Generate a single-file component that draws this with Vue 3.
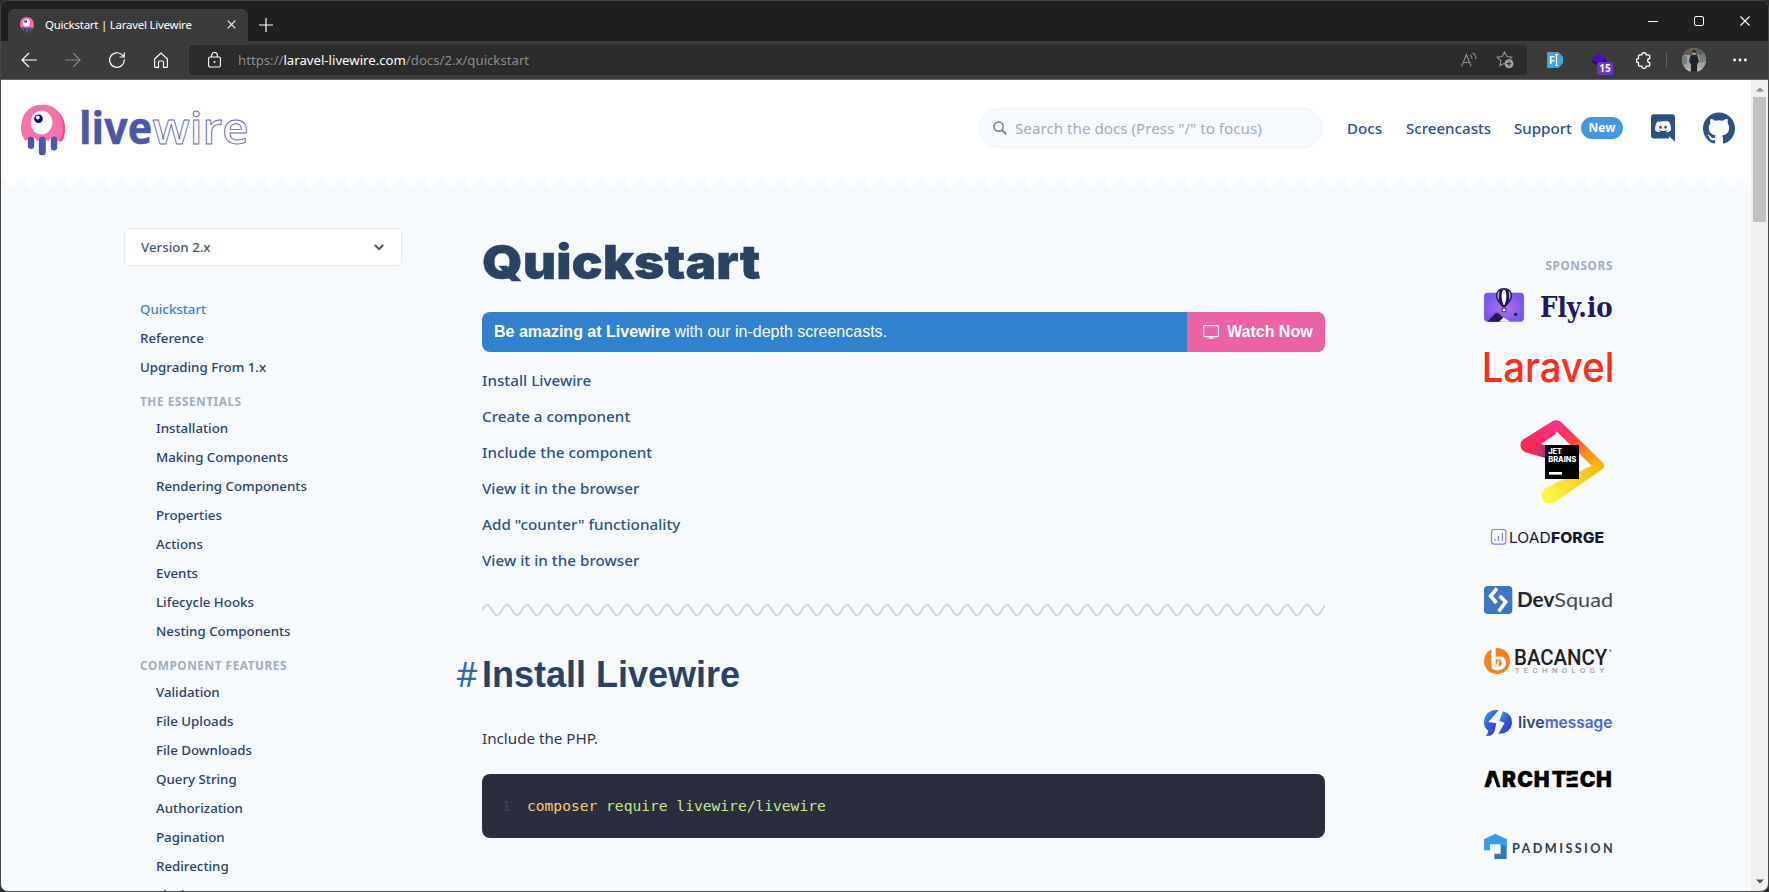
<script setup>
const topLinks = ['Quickstart', 'Reference', 'Upgrading From 1.x']
const sections = [
  {
    title: 'The Essentials',
    links: ['Installation', 'Making Components', 'Rendering Components', 'Properties', 'Actions', 'Events', 'Lifecycle Hooks', 'Nesting Components'],
  },
  {
    title: 'Component Features',
    links: ['Validation', 'File Uploads', 'File Downloads', 'Query String', 'Authorization', 'Pagination', 'Redirecting', 'Flash Messages'],
  },
]
const toc = [
  'Install Livewire',
  'Create a component',
  'Include the component',
  'View it in the browser',
  'Add "counter" functionality',
  'View it in the browser',
]
</script>

<template>
  <div class="window">
    <svg class="defs" width="0" height="0">
      <symbol id="jelly" viewBox="0 0 44 51">
        <path d="M36 34C40 30 41 8 33 4C40 8 44 15 44 24C44 30 42 34 41 36Q38 38 36 34Z" fill="#ee5d99" />
        <path d="M0 24C0 9 9 0 21.500 0C34 0 42 9 42 24C42 30 39 35 38 37Q35 36 34.500 33.500Q31 30 28 36Q27 38 25 35Q21.500 29 18 35Q16 38 15 35Q10 29 6.500 35Q5 37 4 36C2 33 0 29 0 24Z" fill="#fb70a9" />
        <path d="M38 8C43 14 45 28 38.500 37Q42 38 43 32C45 24 44 14 38 8Z" fill="#e24ca6" />
        <rect x="6.800" y="32" width="6.400" height="12.500" rx="3.200" fill="#4e56a6" />
        <rect x="17.800" y="32" width="7" height="19" rx="3.500" fill="#4e56a6" />
        <rect x="29.800" y="32" width="6.400" height="14" rx="3.200" fill="#4e56a6" />
        <ellipse cx="20.500" cy="18" rx="10.800" ry="12" fill="#fff" />
        <circle cx="17.500" cy="14.200" r="4.300" fill="#030776" />
        <circle cx="16.800" cy="13" r="1.900" fill="#fff" />
      </symbol>
    </svg>

    <div class="titlebar">
      <div class="tab">
        <svg class="favicon"><use href="#jelly" /></svg>
        <span class="tab-title">Quickstart | Laravel Livewire</span>
        <svg class="tab-close" viewBox="0 0 9 9"><path d="M.7.7l7.600 7.600M8.300.7L.7 8.300" stroke="#f2f2f2" stroke-width="1.200" /></svg>
      </div>
      <svg class="new-tab" viewBox="0 0 14 14"><path d="M7 0v14M0 7h14" stroke="#fff" stroke-width="1.200" /></svg>
      <div class="controls">
        <svg width="10" height="10"><path d="M0 5.500h10" stroke="#fff" /></svg>
        <svg width="10" height="10"><rect x=".5" y=".5" width="9" height="9" rx="1.500" fill="none" stroke="#fff" /></svg>
        <svg width="10" height="10"><path d="M.5.500l9 9M9.500.500l-9 9" stroke="#fff" stroke-width="1.100" /></svg>
      </div>
    </div>

    <div class="toolbar">
      <div class="nav-icons">
        <svg width="16" height="16" fill="none" stroke="#fff" stroke-width="1.200"><path d="M16 8H1M8 1L1 8l7 7" /></svg>
        <svg width="16" height="16" fill="none" stroke="#858585" stroke-width="1.200"><path d="M0 8h15M8 1l7 7-7 7" /></svg>
        <svg width="16" height="16" fill="none" stroke="#fff" stroke-width="1.200"><path d="M15.200 7.300A7.300 7.300 0 1 1 13.400 3.200L15.300 5M15.300 0.500V5H10.500" /></svg>
        <svg width="16" height="16" fill="none" stroke="#fff" stroke-width="1.200"><path d="M1.600 7L8 1l6.400 6v7.400a1 1 0 0 1-1 1H10.500V10a1 1 0 0 0-1-1h-3a1 1 0 0 0-1 1v5.400H2.600a1 1 0 0 1-1-1Z" /></svg>
      </div>
      <div class="address">
        <svg class="lock" width="13" height="16" fill="none" stroke="#fff" stroke-width="1.100"><rect x=".6" y="5" width="11.800" height="10" rx="1.500" /><path d="M3.700 5V3.300a2.800 2.800 0 0 1 5.600 0V5" /><circle cx="6.500" cy="10" r="1" fill="#fff" stroke="none" /></svg>
        <span class="url">https://<b>laravel-livewire.com</b>/docs/2.x/quickstart</span>
        <svg class="read" width="16" height="16" fill="none" stroke="#8f8f8f" stroke-width="1.100"><path d="M.6 14.500L5.400 2.500l4.800 12M2.200 10.500h6.400M9.200 3q1.700 1.200 1.900 3.800M11.700.6q3 2.200 3.300 6.400" /></svg>
        <svg width="18" height="18" fill="none" stroke="#8f8f8f" stroke-width="1.200"><path d="M8.500 12.300L4 14.700l.9-5L1.200 6.200l5-.7L8.500 1l2.300 4.500 5 .7-2 2" /><circle cx="13" cy="12.700" r="4.500" fill="#a3a3a3" stroke="none" /><path d="M13 10.300v4.800M10.600 12.700h4.800" stroke="#2b2b2b" /></svg>
      </div>
      <div class="extensions">
        <svg class="fi" width="16" height="16"><path d="M1 0h10.500L16 5v6l-4.500 5H1a1 1 0 0 1-1-1V1a1 1 0 0 1 1-1Z" fill="#42a5e3" /><text x="1.800" y="12" class="fi-text">F</text><path d="M8 2.500h3M8 13.500h3M9.500 2.500v11" stroke="#fff" stroke-width="1.200" /></svg>
        <div class="layers">
          <svg width="16" height="15"><path d="M0 8l8-4 8 4-8 6Z" fill="#1f0a78" /><path d="M0 6l8-6 8 6-8 5Z" fill="#4c0bb5" /></svg>
          <span class="count">15</span>
        </div>
        <svg class="puzzle" width="16" height="17" fill="none" stroke="#fff" stroke-width="1.300"><path d="M3.500 2.800H5.800a2.200 2.200 0 0 1 4.400 0h2.500a1 1 0 0 1 1 1V6.500a2 2 0 1 0 0 4.200v2.500a1 1 0 0 1-1 1H10.200a2.200 2.200 0 0 1-4.400 0H3.500a1 1 0 0 1-1-1V10.700a2.100 2.100 0 0 1 0-4.200V3.800a1 1 0 0 1 1-1Z" /></svg>
        <span class="divider"></span>
        <svg class="avatar" width="24" height="24">
          <defs><clipPath id="face"><circle cx="12" cy="12" r="12" /></clipPath></defs>
          <g clip-path="url(#face)">
            <rect width="24" height="24" fill="#a3a5a2" /><rect width="24" height="7" fill="#5b6157" /><path d="M0 5l5 4v7l-5 1ZM17 7l7-2v8l-6 2Z" fill="#787d76" />
            <path d="M8.500 7.500q3.500-2 7 0l1.500 6-2 3v8H9v-8l-2-3Z" fill="#1d2430" /><path d="M0 20h8v4H0ZM16 20h8v4h-8Z" fill="#bdbdbb" /><circle cx="12" cy="5" r="2.200" fill="#b78a70" /><path d="M9.700 4.500a2.300 2.300 0 0 1 4.600 0Z" fill="#1b1b20" />
          </g>
        </svg>
        <svg class="more" width="14" height="4" fill="#fff"><circle cx="1.600" cy="2" r="1.400" /><circle cx="7" cy="2" r="1.400" /><circle cx="12.400" cy="2" r="1.400" /></svg>
      </div>
    </div>

    <div class="viewport">
      <div class="page">
        <header class="header">
          <svg class="logo" viewBox="0 0 228 54">
            <use href="#jelly" x="0" y="3.500" width="44" height="51" />
            <text x="58" y="43" textLength="73" lengthAdjust="spacingAndGlyphs" class="live">live</text>
            <text x="131.500" y="43" textLength="96" lengthAdjust="spacingAndGlyphs" class="wire">wire</text>
          </svg>
          <div class="search">
            <svg width="14" height="14" fill="none" stroke="#718096" stroke-width="1.500"><circle cx="5.600" cy="5.600" r="4.600" /><path d="M9 9l4.300 4.300" stroke-width="1.900" /></svg>
            <span>Search the docs (Press "/" to focus)</span>
          </div>
          <a class="link docs">Docs</a>
          <a class="link casts">Screencasts</a>
          <a class="link support">Support</a>
          <span class="new">New</span>
          <svg class="discord" viewBox="35 20 175 200"><path d="M104.400 103.900c-5.700 0-10.200 5-10.200 11.100s4.600 11.100 10.200 11.100c5.700 0 10.200-5 10.200-11.100.1-6.100-4.500-11.100-10.200-11.100zM140.900 103.900c-5.700 0-10.200 5-10.200 11.100s4.600 11.100 10.200 11.100c5.700 0 10.200-5 10.200-11.100s-4.500-11.100-10.200-11.100zM189.500 20h-134C44.200 20 35 29.200 35 40.600v135.200c0 11.400 9.200 20.600 20.500 20.600h113.400l-5.300-18.500 12.800 11.900 12.100 11.200 21.500 19V40.600c0-11.400-9.200-20.600-20.500-20.600zm-38.600 130.600s-3.600-4.300-6.600-8.100c13.100-3.700 18.100-11.900 18.100-11.900-4.100 2.700-8 4.600-11.500 5.900-5 2.100-9.800 3.500-14.500 4.300-9.600 1.800-18.400 1.300-25.900-.1-5.700-1.100-10.600-2.700-14.700-4.300-2.300-.9-4.800-2-7.300-3.400-.3-.2-.6-.3-.9-.5-.2-.1-.3-.2-.4-.3-1.800-1-2.800-1.700-2.800-1.700s4.800 8 17.500 11.800c-3 3.800-6.700 8.300-6.700 8.300-22.100-.7-30.500-15.200-30.500-15.200 0-32.200 14.400-58.300 14.400-58.300 14.400-10.800 28.100-10.500 28.100-10.500l1 1.200c-18 5.200-26.300 13.100-26.300 13.100s2.200-1.200 5.900-2.900c10.700-4.700 19.200-6 22.700-6.300.6-.1 1.100-.2 1.700-.2 6.100-.8 13-1 20.200-.2 9.500 1.100 19.700 3.900 30.100 9.600 0 0-7.900-7.500-24.900-12.700l1.400-1.600s13.700-.3 28.100 10.500c0 0 14.400 26.100 14.400 58.300 0 0-8.500 14.500-30.600 15.200z" fill="#2c5282" /></svg>
          <svg class="github" viewBox="0 0 24 24"><path d="M12 .297c-6.630 0-12 5.373-12 12 0 5.303 3.438 9.800 8.205 11.385.6.113.82-.258.82-.577 0-.285-.01-1.040-.015-2.040-3.338.724-4.042-1.610-4.042-1.610C4.422 18.070 3.633 17.700 3.633 17.700c-1.087-.744.084-.729.084-.729 1.205.084 1.838 1.236 1.838 1.236 1.070 1.835 2.809 1.305 3.495.998.108-.776.417-1.305.76-1.605-2.665-.3-5.466-1.332-5.466-5.930 0-1.310.465-2.380 1.235-3.220-.135-.303-.54-1.523.105-3.176 0 0 1.005-.322 3.300 1.230.96-.267 1.980-.399 3-.405 1.020.006 2.040.138 3 .405 2.280-1.552 3.285-1.230 3.285-1.230.645 1.653.24 2.873.12 3.176.765.84 1.230 1.910 1.230 3.220 0 4.610-2.805 5.625-5.475 5.920.42.36.81 1.096.81 2.220 0 1.606-.015 2.896-.015 3.286 0 .315.21.69.825.57C20.565 22.092 24 17.592 24 12.297c0-6.627-5.373-12-12-12" fill="#2c5282" /></svg>
        </header>
        <svg class="header-wave" width="1750" height="10">
          <defs><pattern id="scallop" width="20" height="10" patternUnits="userSpaceOnUse"><path d="M0 0C4 0 6 10 10 10S16 0 20 0Z" fill="#fff" /></pattern></defs>
          <rect width="1750" height="10" fill="url(#scallop)" />
        </svg>

        <div class="columns">
          <aside class="sidebar">
            <div class="select">
              <span>Version 2.x</span>
              <svg width="10" height="7" fill="none" stroke="#4a5568" stroke-width="2"><path d="M.8 1L5 5.200 9.200 1" /></svg>
            </div>
            <nav class="menu">
              <a v-for="(l, i) in topLinks" :key="l" class="item" :class="{ active: i === 0 }">{{ l }}</a>
              <template v-for="s in sections" :key="s.title">
                <h4 class="group">{{ s.title }}</h4>
                <a v-for="l in s.links" :key="l" class="item sub">{{ l }}</a>
              </template>
            </nav>
          </aside>

          <main class="main">
            <h1>Quickstart</h1>
            <div class="banner">
              <p><b>Be amazing at Livewire</b> with our in-depth screencasts.</p>
              <a class="watch">
                <svg width="16" height="14" fill="none" stroke="#fff"><rect x=".6" y=".6" width="14.800" height="11" rx="1" stroke-width="1.100" /><path d="M6.500 12h3v1h2.500v.5H4V13h2.500Z" fill="#fff" stroke="none" /></svg>
                Watch Now
              </a>
            </div>
            <ul class="toc"><li v-for="(t, i) in toc" :key="i">{{ t }}</li></ul>
            <svg class="rule" width="843" height="14">
              <defs><pattern id="ripple" width="20" height="14" patternUnits="userSpaceOnUse"><path d="M-5 12.300C-1 12.300 1 1.700 5 1.700S11 12.300 15 12.300 21 1.700 25 1.700" fill="none" stroke="#cbd5e0" stroke-width="1.900" /></pattern></defs>
              <rect width="843" height="14" fill="url(#ripple)" />
            </svg>
            <h2><a>#</a>Install Livewire</h2>
            <p class="text">Include the PHP.</p>
            <pre class="code"><i>1</i><b>composer</b> require livewire/livewire</pre>
          </main>

          <aside class="sponsors">
            <h4>Sponsors</h4>
            <svg class="fly" viewBox="72 141 387 114" height="38">
              <defs><radialGradient id="flybg"><stop offset="0" stop-color="#b46fee" /><stop offset="1" stop-color="#7a5ae6" /></radialGradient></defs>
              <rect x="72" y="158" width="120" height="87" rx="11" fill="url(#flybg)" />
              <path d="M82 245l24-25q5-3 9 0l28 25Z" fill="#24175b" /><path d="M117 245l14-13 4 3 15 10Z" fill="#fff" />
              <path d="M132 144c-15 0-24 10-24 23 0 14 12 24 19 35h10c7-11 19-21 19-35 0-13-9-23-24-23Z" fill="#24175b" />
              <path d="M132 149c-5 0-7 8-7 19s3 21 6 27h2c3-6 6-16 6-27s-2-19-7-19ZM119 153c-8 6-8 19-2 27-2-9-2-19 2-27ZM145 153c8 6 8 19 2 27 2-9 2-19-2-27Z" fill="#fff" />
              <circle cx="132" cy="210" r="7" fill="#24175b" /><circle cx="132" cy="210" r="4.500" fill="#fff" /><circle cx="167" cy="223" r="5" fill="#24175b" />
              <text x="240" y="232" textLength="218" lengthAdjust="spacingAndGlyphs" class="t-fly">Fly.io</text>
            </svg>
            <svg class="laravel" viewBox="72 330 387 99" height="33"><text x="65" y="425" textLength="398" lengthAdjust="spacingAndGlyphs" class="t-laravel">Laravel</text></svg>
            <svg class="jetbrains" viewBox="72 537 387 258" height="86">
              <defs>
                <linearGradient id="jb1" x1="0" y1="1" x2="1" y2="0"><stop offset="0" stop-color="#fb2848" /><stop offset="1" stop-color="#ff318c" /></linearGradient>
                <linearGradient id="jb2" gradientUnits="userSpaceOnUse" x1="290" y1="560" x2="410" y2="680"><stop offset="0" stop-color="#ff318c" /><stop offset=".3" stop-color="#fd3a4e" /><stop offset=".7" stop-color="#fb8c1c" /><stop offset="1" stop-color="#fdb60d" /></linearGradient>
                <linearGradient id="jb3" gradientUnits="userSpaceOnUse" x1="265" y1="770" x2="420" y2="680"><stop offset="0" stop-color="#fdf841" /><stop offset="1" stop-color="#fdb60d" /></linearGradient>
                <linearGradient id="jb4" gradientUnits="userSpaceOnUse" x1="190" y1="620" x2="270" y2="650"><stop offset="0" stop-color="#fb2460" /><stop offset=".5" stop-color="#e62d66" /><stop offset="1" stop-color="#6b3a8c" /></linearGradient>
              </defs>
              <path d="M193 636L265 656V622L220 600Z" fill="url(#jb4)" />
              <path d="M190 598L277 544Q290 536 302 546L286 583L211 634Q190 640 183 624Q178 607 190 598Z" fill="url(#jb1)" />
              <path d="M275 560Q286 532 303 546L427 666Q435 676 427 686L398 680Z" fill="url(#jb2)" />
              <path d="M398 675L432 672Q435 682 426 688L286 785Q263 798 248 780Q236 758 257 744Z" fill="url(#jb3)" />
              <rect x="255" y="615" width="102" height="102" fill="#000" />
              <text x="265" y="643" textLength="41" lengthAdjust="spacingAndGlyphs" class="t-jb">JET</text>
              <text x="265" y="666" textLength="84" lengthAdjust="spacingAndGlyphs" class="t-jb">BRAINS</text>
              <rect x="267" y="696" width="39" height="8" fill="#fff" />
            </svg>
            <svg class="loadforge" viewBox="72 54 387 54" height="18">
              <rect x="94.500" y="58.500" width="43" height="44" rx="8" fill="none" stroke="#8b7cf0" stroke-width="3.500" /><path d="M105 86v7M115 78v15M127 69v24" stroke="#8b7cf0" stroke-width="3.500" />
              <text x="147" y="98" textLength="125" lengthAdjust="spacingAndGlyphs" class="t-load">LOAD</text>
              <text x="273" y="98" textLength="159" lengthAdjust="spacingAndGlyphs" class="t-load heavy">FORGE</text>
            </svg>
            <svg class="devsquad" viewBox="72 225 387 90" height="30">
              <rect x="72" y="228" width="85" height="84" rx="12" fill="#3c78c3" />
              <path d="M111 235L92 258L109 279M119 257L137 276L116 304" fill="none" stroke="#fff" stroke-width="11" />
              <text x="171" y="291" textLength="112" lengthAdjust="spacingAndGlyphs" class="t-dev">Dev</text>
              <text x="283" y="291" textLength="176" lengthAdjust="spacingAndGlyphs" class="t-dev light">Squad</text>
            </svg>
            <svg class="bacancy" viewBox="72 411 387 84" height="28">
              <circle cx="111" cy="453" r="39" fill="#f58220" />
              <path d="M94 414l13-5v32q28-8 31 18-1 20-24 22-20 0-20-14Z" fill="#f7fafc" /><path d="M107 448q16-5 18 11-2 14-18 11Z" fill="#f58220" /><path d="M107 472l9-30v28Z" fill="#f7fafc" />
              <text x="162" y="465" textLength="280" lengthAdjust="spacingAndGlyphs" class="t-bac">BACANCY</text><circle cx="451" cy="422" r="4" fill="#999" />
              <text x="164" y="490" textLength="268" class="t-tech">TECHNOLOGY</text>
            </svg>
            <svg class="livemessage" viewBox="72 597 387 84" height="28">
              <defs><linearGradient id="lm" x1="0" y1="0" x2="1" y2="1"><stop offset="0" stop-color="#2fa5f5" /><stop offset=".5" stop-color="#3457dc" /><stop offset="1" stop-color="#2634b0" /></linearGradient></defs>
              <path d="M116 600Q72 598 72 640Q73 655 85 662Q84 671 77 677Q96 680 103 665L109 640L85 636Z" fill="url(#lm)" /><path d="M129 604Q158 612 156 641Q150 672 115 671L134 639L118 632Z" fill="url(#lm)" />
              <text x="174" y="654" textLength="80" lengthAdjust="spacingAndGlyphs" class="t-lm dark">live</text>
              <text x="254" y="654" textLength="203" lengthAdjust="spacingAndGlyphs" class="t-lm">message</text>
            </svg>
            <svg class="archtech" viewBox="72 783 387 54" height="18">
              <text x="72 126 172 221 275 317 359 408" y="832" class="t-arch">ARCHTECH</text>
              <path d="M88 834L100 801L112 834ZM317 796.500h19v7h-19ZM317 813.500h19v8h-19Z" fill="#f7fafc" />
            </svg>
            <svg class="padmission" viewBox="72 969 387 81" height="27">
              <path d="M72 1021V988L106 971l34 17V1014L121 1003H90V1021Z" fill="#3a9ce8" /><path d="M122 1003L140 1008V1047H103V1031H122Z" fill="#3578ad" /><path d="M121 1003V996L140 985V1012Z" fill="#3a9ce8" />
              <text x="156" y="1030" textLength="302" class="t-pad">PADMISSION</text>
            </svg>
          </aside>
        </div>
      </div>
      <div class="scrollbar">
        <svg width="8" height="5"><path d="M0 4.500L4 .5l4 4Z" fill="#8a8a8a" /></svg>
        <span class="thumb"></span>
        <svg class="down" width="8" height="5"><path d="M0 .5h8L4 4.500Z" fill="#505050" /></svg>
      </div>
    </div>
  </div>
</template>

<style>
body { background: #2c2c2e; }
</style>

<style scoped>
* { box-sizing: border-box; margin: 0; padding: 0; }
svg { display: block; flex: none; }
.defs { position: absolute; }
.window { width: 1769px; height: 892px; display: flex; flex-direction: column; border: 1px solid #464646; border-radius: 8px; overflow: hidden; background: #202020; font-family: "Noto Sans", sans-serif; }
.titlebar { height: 40px; flex: none; display: flex; background: #202020; }
.tab { width: 240px; height: 32px; margin: 8px 0 0 7px; padding: 0 0 1px 11px; display: flex; align-items: center; background: #3b3b3b; border-radius: 6px 6px 0 0; }
.favicon { width: 16px; height: 16px; }
.tab-title { width: 182px; margin-left: 10px; font-size: 11.500px; letter-spacing: -.25px; color: #fff; white-space: nowrap; }
.tab-close { width: 9px; height: 9px; }
.new-tab { width: 14px; height: 14px; margin: 17px 0 0 11px; }
.controls { display: flex; gap: 36px; margin: 15px 18px 0 auto; }
.toolbar { height: 39px; flex: none; display: flex; align-items: center; background: #3b3b3b; border-bottom: 1px solid #666; }
.nav-icons { display: flex; gap: 28px; margin-left: 20px; width: 168px; }
.address { width: 1338px; height: 30px; display: flex; align-items: center; padding: 0 13px 0 19px; background: #2b2b2b; border-radius: 5px; }
.url { margin-left: 17px; font-size: 13.200px; color: #8c8c8c; white-space: nowrap; }
.url b { font-weight: 400; color: #fff; }
.read { margin: 0 19px 0 auto; }
.extensions { display: flex; align-items: center; margin-left: 20px; flex: 1; }
.fi-text { font: 700 11px "Open Sans", sans-serif; fill: #fff; }
.layers { position: relative; width: 16px; margin-left: 28px; }
.count { position: absolute; left: 6px; top: 9px; width: 16px; height: 13px; border-radius: 2px; background: #6a39c0; color: #fff; font: 700 10px/13px "Noto Sans", sans-serif; text-align: center; }
.puzzle { margin-left: 29px; }
.divider { width: 1px; height: 16px; margin-left: 14px; background: #606060; }
.avatar { margin-left: 15px; }
.more { margin-left: 27px; }
.viewport { flex: 1; min-height: 0; display: flex; background: #f0f0f0; }
.page { width: 1750px; height: 811px; overflow: hidden; background: #f7fafc; }
.header { height: 97px; display: flex; align-items: center; padding: 0 16px 2px 20px; background: #fff; }
.logo { width: 228px; height: 54px; overflow: visible; }
.live { font: 700 44px "Open Sans", sans-serif; fill: #4e56a6; stroke: #4e56a6; stroke-width: .5; stroke-linejoin: round; }
.wire { font: 600 44px "Open Sans", sans-serif; fill: #fff; stroke: #5d65b0; stroke-width: .9; stroke-linejoin: round; }
.search { width: 344px; height: 40px; margin-left: auto; padding-left: 13px; display: flex; align-items: center; gap: 8px; background: #f7fafc; border: 1px solid #edf2f7; border-radius: 20px; font-size: 15.200px; color: #a0aec0; white-space: nowrap; }
.link { font-size: 15.100px; font-weight: 500; color: #2c5282; white-space: nowrap; }
.docs { width: 36px; margin-left: 24px; }
.casts { width: 84px; margin-left: 23px; }
.support { width: 59px; margin-left: 24px; }
.new { width: 42px; height: 22px; margin-left: 8px; border-radius: 11px; background: #4299e1; color: #fff; font-size: 12px; font-weight: 700; line-height: 22px; text-align: center; }
.discord { width: 24px; height: 28px; margin-left: 28px; }
.github { width: 32px; height: 32px; margin-left: 28px; }
.columns { display: flex; align-items: flex-start; }
.sidebar { width: 278px; margin: 41px 0 0 123px; }
.select { height: 38px; display: flex; align-items: center; justify-content: space-between; padding: 0 17px 0 16px; background: #fff; border: 1px solid #e2e8f0; border-radius: 5px; color: #4a5568; font-size: 13.300px; font-weight: 500; }
.menu { margin-top: 29px; padding-left: 16px; }
.item { display: block; height: 29px; line-height: 29px; font-size: 13.300px; font-weight: 500; color: #2a4365; }
.sub { padding-left: 16px; }
.active { color: #4080cc; }
.group { height: 32px; padding-top: 7px; font-size: 11.800px; line-height: 25px; font-weight: 700; text-transform: uppercase; letter-spacing: .55px; color: #a0aec0; }
.main { width: 843px; margin: 45px 0 0 80px; }
h1 { height: 60px; line-height: 60px; font-family: Inter, sans-serif; font-weight: 900; font-size: 47px; color: #2a4365; white-space: nowrap; -webkit-text-stroke: .4px #2a4365; transform: scaleX(1.1); transform-origin: left; }
.banner { height: 40px; margin-top: 20px; display: flex; border-radius: 8px; overflow: hidden; background: #3182ce; color: #fff; font: 16px/40px "Liberation Sans", Arial, sans-serif; }
.banner p { flex: 1; padding: 0 12px; line-height: 39px; }
.watch { width: 138px; display: flex; align-items: center; gap: 8px; padding: 0 0 1px 16px; background: #ed64a6; font-weight: 700; line-height: 39px; white-space: nowrap; }
.toc { margin-top: 10px; list-style: none; }
.toc li { height: 36px; line-height: 36px; font-size: 15.200px; font-weight: 500; letter-spacing: .03px; color: #2c5282; }
.rule { margin-top: 25px; }
h2 { height: 44px; margin: 36px 0 0 -26px; display: flex; font: 700 36px/44px "Liberation Sans", Arial, sans-serif; color: #2a4365; white-space: nowrap; }
h2 a { width: 26px; font: 400 34px/42px "Noto Sans", sans-serif; color: #2b6cb0; }
.text { height: 28px; margin-top: 27px; line-height: 28px; font-size: 15.200px; color: #2d3748; }
.code { height: 64px; margin-top: 22px; padding-left: 20px; border-radius: 8px; background: #292d3e; color: #c3e88d; font: 14.600px/64px "DejaVu Sans Mono", monospace; }
.code i { display: inline-block; width: 25px; font-style: normal; color: #3a4560; }
.code b { font-weight: 400; color: #ffcb6b; }
.sponsors { width: 129px; margin: 68px 0 0 159px; }
.sponsors h4 { height: 20px; font-size: 11.800px; line-height: 20px; font-weight: 700; letter-spacing: .6px; text-transform: uppercase; text-align: right; color: #a0aec0; }
.sponsors svg { width: 129px; overflow: visible; }
.sponsors .fly { margin-top: 12px; }
.laravel { margin-top: 25px; }
.jetbrains { margin-top: 36px; }
.loadforge { margin-top: 23px; }
.devsquad { margin-top: 39px; }
.bacancy { margin-top: 32px; }
.livemessage, .archtech { margin-top: 34px; }
.padmission { margin-top: 44px; }
.t-fly { font: 700 84px "DejaVu Serif", serif; fill: #24175b; }
.t-laravel { font: 500 124px Inter, sans-serif; fill: #ff2d20; }
.t-jb { font: 800 23px Inter, sans-serif; fill: #fff; }
.t-load { font: 400 44px Inter, sans-serif; fill: #14182b; }
.t-load.heavy { font-weight: 800; }
.t-dev { font: 700 60px Lato, sans-serif; fill: #22262b; }
.t-dev.light { font-weight: 400; fill: #44484d; }
.t-bac { font: 500 65px Roboto, sans-serif; fill: #252122; }
.t-tech { font: 400 23px Roboto, sans-serif; fill: #8c8c8c; }
.t-lm { font: 600 47px Inter, sans-serif; fill: #4966e0; }
.t-lm.dark { fill: #2e4389; }
.t-arch { font: 900 63px Inter, sans-serif; fill: #000; stroke: #000; stroke-width: 1; }
.t-pad { font: 700 38px Lato, sans-serif; fill: #2d3e50; }
.scrollbar { width: 17px; height: 811px; display: flex; flex-direction: column; align-items: center; padding-top: 7px; }
.thumb { width: 13px; height: 125px; margin-top: 5px; background: #c1c1c1; }
.down { margin: auto 0 7px; }
</style>
